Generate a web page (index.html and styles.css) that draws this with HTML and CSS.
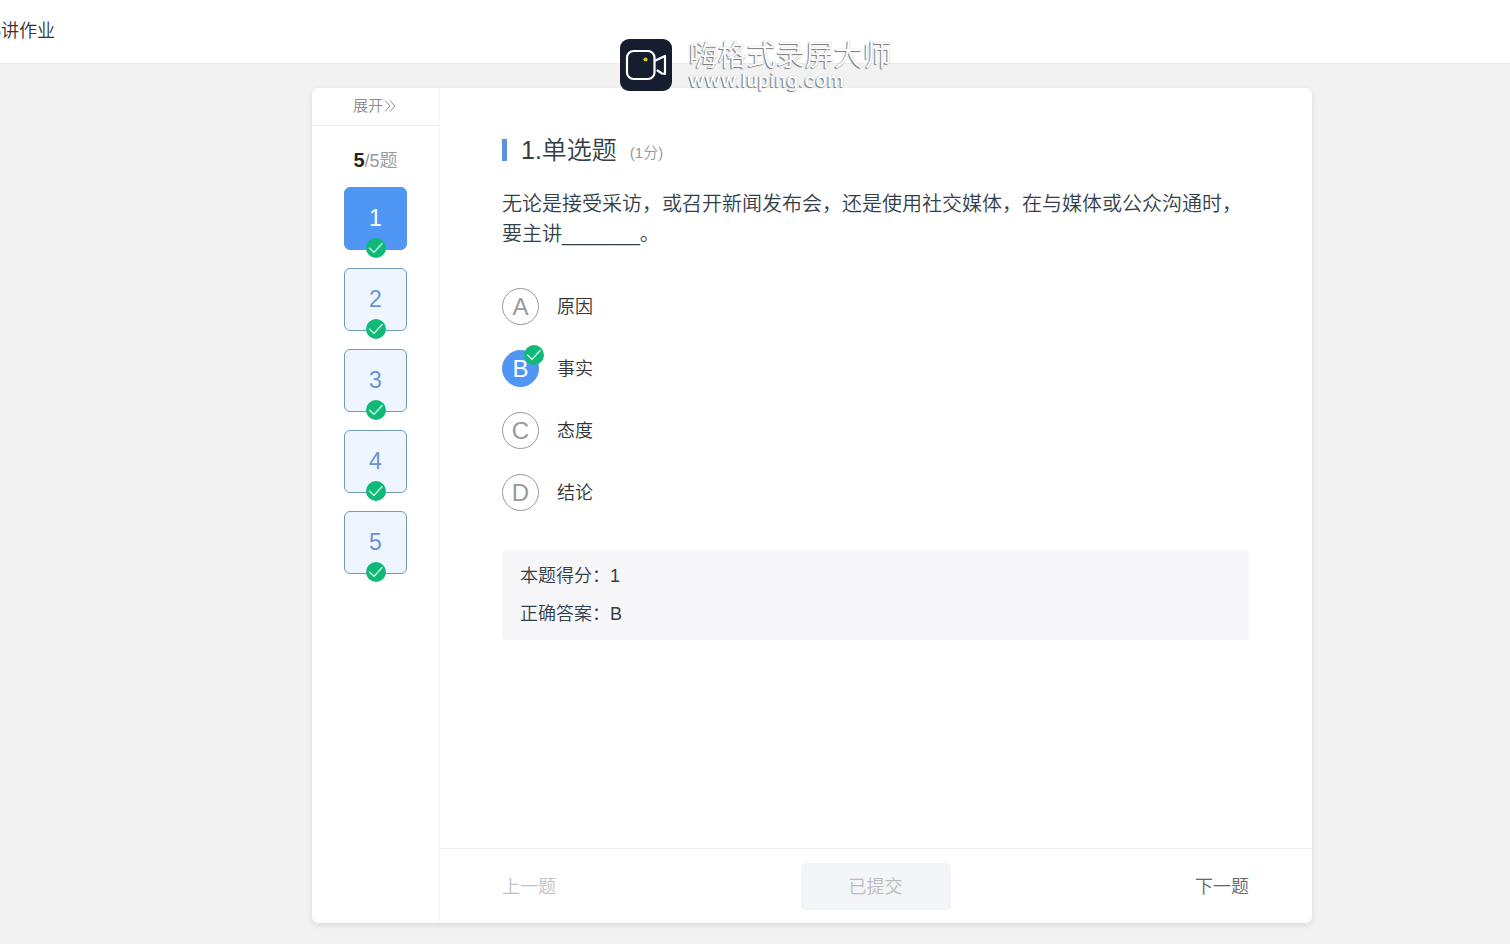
FILE: index.html
```html
<!DOCTYPE html>
<html lang="zh-CN">
<head>
<meta charset="utf-8">
<title>作业</title>
<link rel="stylesheet" href="styles.css">
</head>
<body>
<svg class="sprite" aria-hidden="true">
  <symbol id="check" viewBox="0 0 20 20">
    <circle cx="10" cy="10" r="10" fill="#10b977"/>
    <path d="M3.2 9.8 8 14.4 16.4 5.2" fill="none" stroke="#d9ffec" stroke-width="1.3"/>
  </symbol>
</svg>
<header class="topbar"><h1 class="topbar-title">6讲作业</h1></header>
<div class="watermark">
  <svg class="watermark-logo" viewBox="0 0 52 52" aria-hidden="true">
    <rect width="52" height="52" rx="9" fill="#161d2f"/>
    <rect x="7" y="12" width="27.5" height="28" rx="6.5" fill="none" stroke="#fff" stroke-width="2.2"/>
    <path d="M35.5 21.5 45 17V34.8L42 34.5 37.5 31.5" fill="none" stroke="#fff" stroke-width="2.2" stroke-linejoin="round" stroke-linecap="round"/>
    <circle cx="25.5" cy="20.5" r="2.1" fill="#d8c41c"/>
  </svg>
  <div class="watermark-text">
    <span class="watermark-name">嗨格式录屏大师</span>
    <span class="watermark-url">www.luping.com</span>
  </div>
</div>
<main class="page">
  <div class="card">
    <aside class="sidebar">
      <button class="expand" type="button">展开<svg class="expand-icon" viewBox="0 0 12 12" aria-hidden="true"><path d="M1 .5 6 6 1 11.5M6 .5 11 6 6 11.5" fill="none" stroke="currentColor"/></svg></button>
      <p class="progress"><b>5</b>/5题</p>
      <nav class="tiles">
        <button class="tile tile-current" type="button">1<svg class="tile-check"><use href="#check"/></svg></button>
        <button class="tile" type="button">2<svg class="tile-check"><use href="#check"/></svg></button>
        <button class="tile" type="button">3<svg class="tile-check"><use href="#check"/></svg></button>
        <button class="tile" type="button">4<svg class="tile-check"><use href="#check"/></svg></button>
        <button class="tile" type="button">5<svg class="tile-check"><use href="#check"/></svg></button>
      </nav>
    </aside>
    <section class="content">
      <div class="question">
        <div class="heading">
          <h2 class="heading-title">1.单选题</h2>
          <span class="points">(1分)</span>
        </div>
        <p class="stem">无论是接受采访，或召开新闻发布会，还是使用社交媒体，在与媒体或公众沟通时，要主讲_______。</p>
        <div class="options" role="radiogroup" aria-label="选项">
          <label class="option"><input class="option-input" type="radio" name="answer"><span class="letter">A</span>原因</label>
          <label class="option"><input class="option-input" type="radio" name="answer" checked><span class="letter">B<svg class="letter-check"><use href="#check"/></svg></span>事实</label>
          <label class="option"><input class="option-input" type="radio" name="answer"><span class="letter">C</span>态度</label>
          <label class="option"><input class="option-input" type="radio" name="answer"><span class="letter">D</span>结论</label>
        </div>
        <div class="result">
          <p>本题得分：1</p>
          <p>正确答案：B</p>
        </div>
      </div>
      <footer class="footer">
        <button class="step step-disabled" type="button" disabled>上一题</button>
        <button class="submit" type="button" disabled>已提交</button>
        <button class="step step-next" type="button">下一题</button>
      </footer>
    </section>
  </div>
</main>
</body>
</html>
```
FILE: styles.css
```css
* { box-sizing: border-box; }
body {
  margin: 0;
  min-height: 100vh;
  display: flex;
  flex-direction: column;
  background: #f2f2f2;
  color: #333;
  font: 350 18px/26px "Liberation Sans", "Noto Sans CJK SC", sans-serif;
}
h1, h2, p { margin: 0; font-weight: inherit; }
button { font: inherit; color: inherit; border: 0; padding: 0; background: none; }
.sprite { position: absolute; width: 0; height: 0; }

.topbar {
  height: 64px;
  display: flex;
  align-items: center;
  padding-bottom: 2px;
  background: #fff;
  border-bottom: 1px solid #eaeaea;
}
.topbar-title {
  width: 55px;
  display: flex;
  justify-content: flex-end;
  overflow: hidden;
  white-space: nowrap;
  font-size: 18px;
}

.watermark {
  position: absolute;
  top: 39px;
  left: 50%;
  margin-left: -135px;
  display: flex;
  gap: 17px;
}
.watermark-logo { width: 52px; height: 52px; }
.watermark-text {
  display: flex;
  flex-direction: column;
  color: #fff;
  text-shadow: -1px 1px 1px #777, 0 0 1px #aaa;
}
.watermark-name { font-size: 29px; line-height: 34px; }
.watermark-url { font: 600 19px/16px Inter, sans-serif; }

.page {
  flex: 1;
  display: flex;
  padding: 24px 198px 21px 312px;
}
.card {
  flex: 1;
  display: flex;
  background: #fff;
  border-radius: 6px;
  box-shadow: 0 2px 6px rgba(0, 0, 0, .1);
}
.sidebar {
  width: 128px;
  display: flex;
  flex-direction: column;
  border-right: 1px solid #f4f4f4;
}
.expand {
  height: 38px;
  display: flex;
  align-items: center;
  justify-content: center;
  gap: 1px;
  padding: 0 2px 1px 0;
  border-bottom: 1px solid #ececec;
  color: #8c8c8c;
  font-size: 15px;
}
.expand-icon { width: 12px; height: 12px; }
.progress { margin: 21px 0 13px; text-align: center; color: #999; }
.progress b { color: #222; font-size: 20px; font-weight: 700; }
.tiles {
  display: flex;
  flex-direction: column;
  align-items: center;
  gap: 18px;
}
.tile {
  position: relative;
  width: 63px;
  height: 63px;
  padding-bottom: 1px;
  border: 1px solid #6f9bb8;
  border-radius: 6px;
  background: #eff5ff;
  color: #6794d2;
  font-size: 23px;
}
.tile-current { background: #5096f5; border-color: #5b95e0; color: #fff; }
.tile-check {
  position: absolute;
  left: 21px;
  bottom: -9px;
  width: 20px;
  height: 20px;
}

.content { flex: 1; display: flex; flex-direction: column; }
.question { flex: 1; padding: 45px 63px 24px 62px; }
.heading { display: flex; align-items: center; gap: 13px; }
.heading-title {
  display: flex;
  align-items: center;
  gap: 14px;
  color: #333f48;
  font-size: 25px;
  line-height: 34px;
}
.heading-title::before { content: ""; width: 5px; height: 22px; background: #5b93db; }
.points { padding-top: 6px; color: #999; font-size: 15px; }
.stem { margin-top: 22px; color: #333f48; font-size: 20px; line-height: 30px; }
.options { display: flex; flex-direction: column; gap: 25px; margin-top: 39px; }
.option { position: relative; display: flex; align-items: center; gap: 18px; }
.option-input { position: absolute; opacity: 0; margin: 0; }
.letter {
  position: relative;
  width: 37px;
  height: 37px;
  border: 1px solid #999;
  border-radius: 50%;
  text-align: center;
  line-height: 36px;
  font-size: 24px;
  color: #999;
}
.option-input:checked + .letter { background: #5096f5; border-color: #5096f5; color: #fff; }
.letter-check { position: absolute; top: -6px; right: -6px; width: 20px; height: 20px; }
.result {
  margin-top: 39px;
  padding: 7px 18px;
  border-radius: 4px;
  background: #f7f6f9;
  color: #333f48;
  line-height: 38px;
}
.footer {
  display: grid;
  grid-template-columns: 1fr 150px 1fr;
  align-items: center;
  padding: 14px 63px 13px 62px;
  border-top: 1px solid #ededed;
}
.step { justify-self: start; color: #666; }
.step-disabled { color: #c0c2c8; }
.step-next { justify-self: end; }
.submit { height: 47px; border-radius: 4px; background: #f4f5f8; color: #bbb; }
```
